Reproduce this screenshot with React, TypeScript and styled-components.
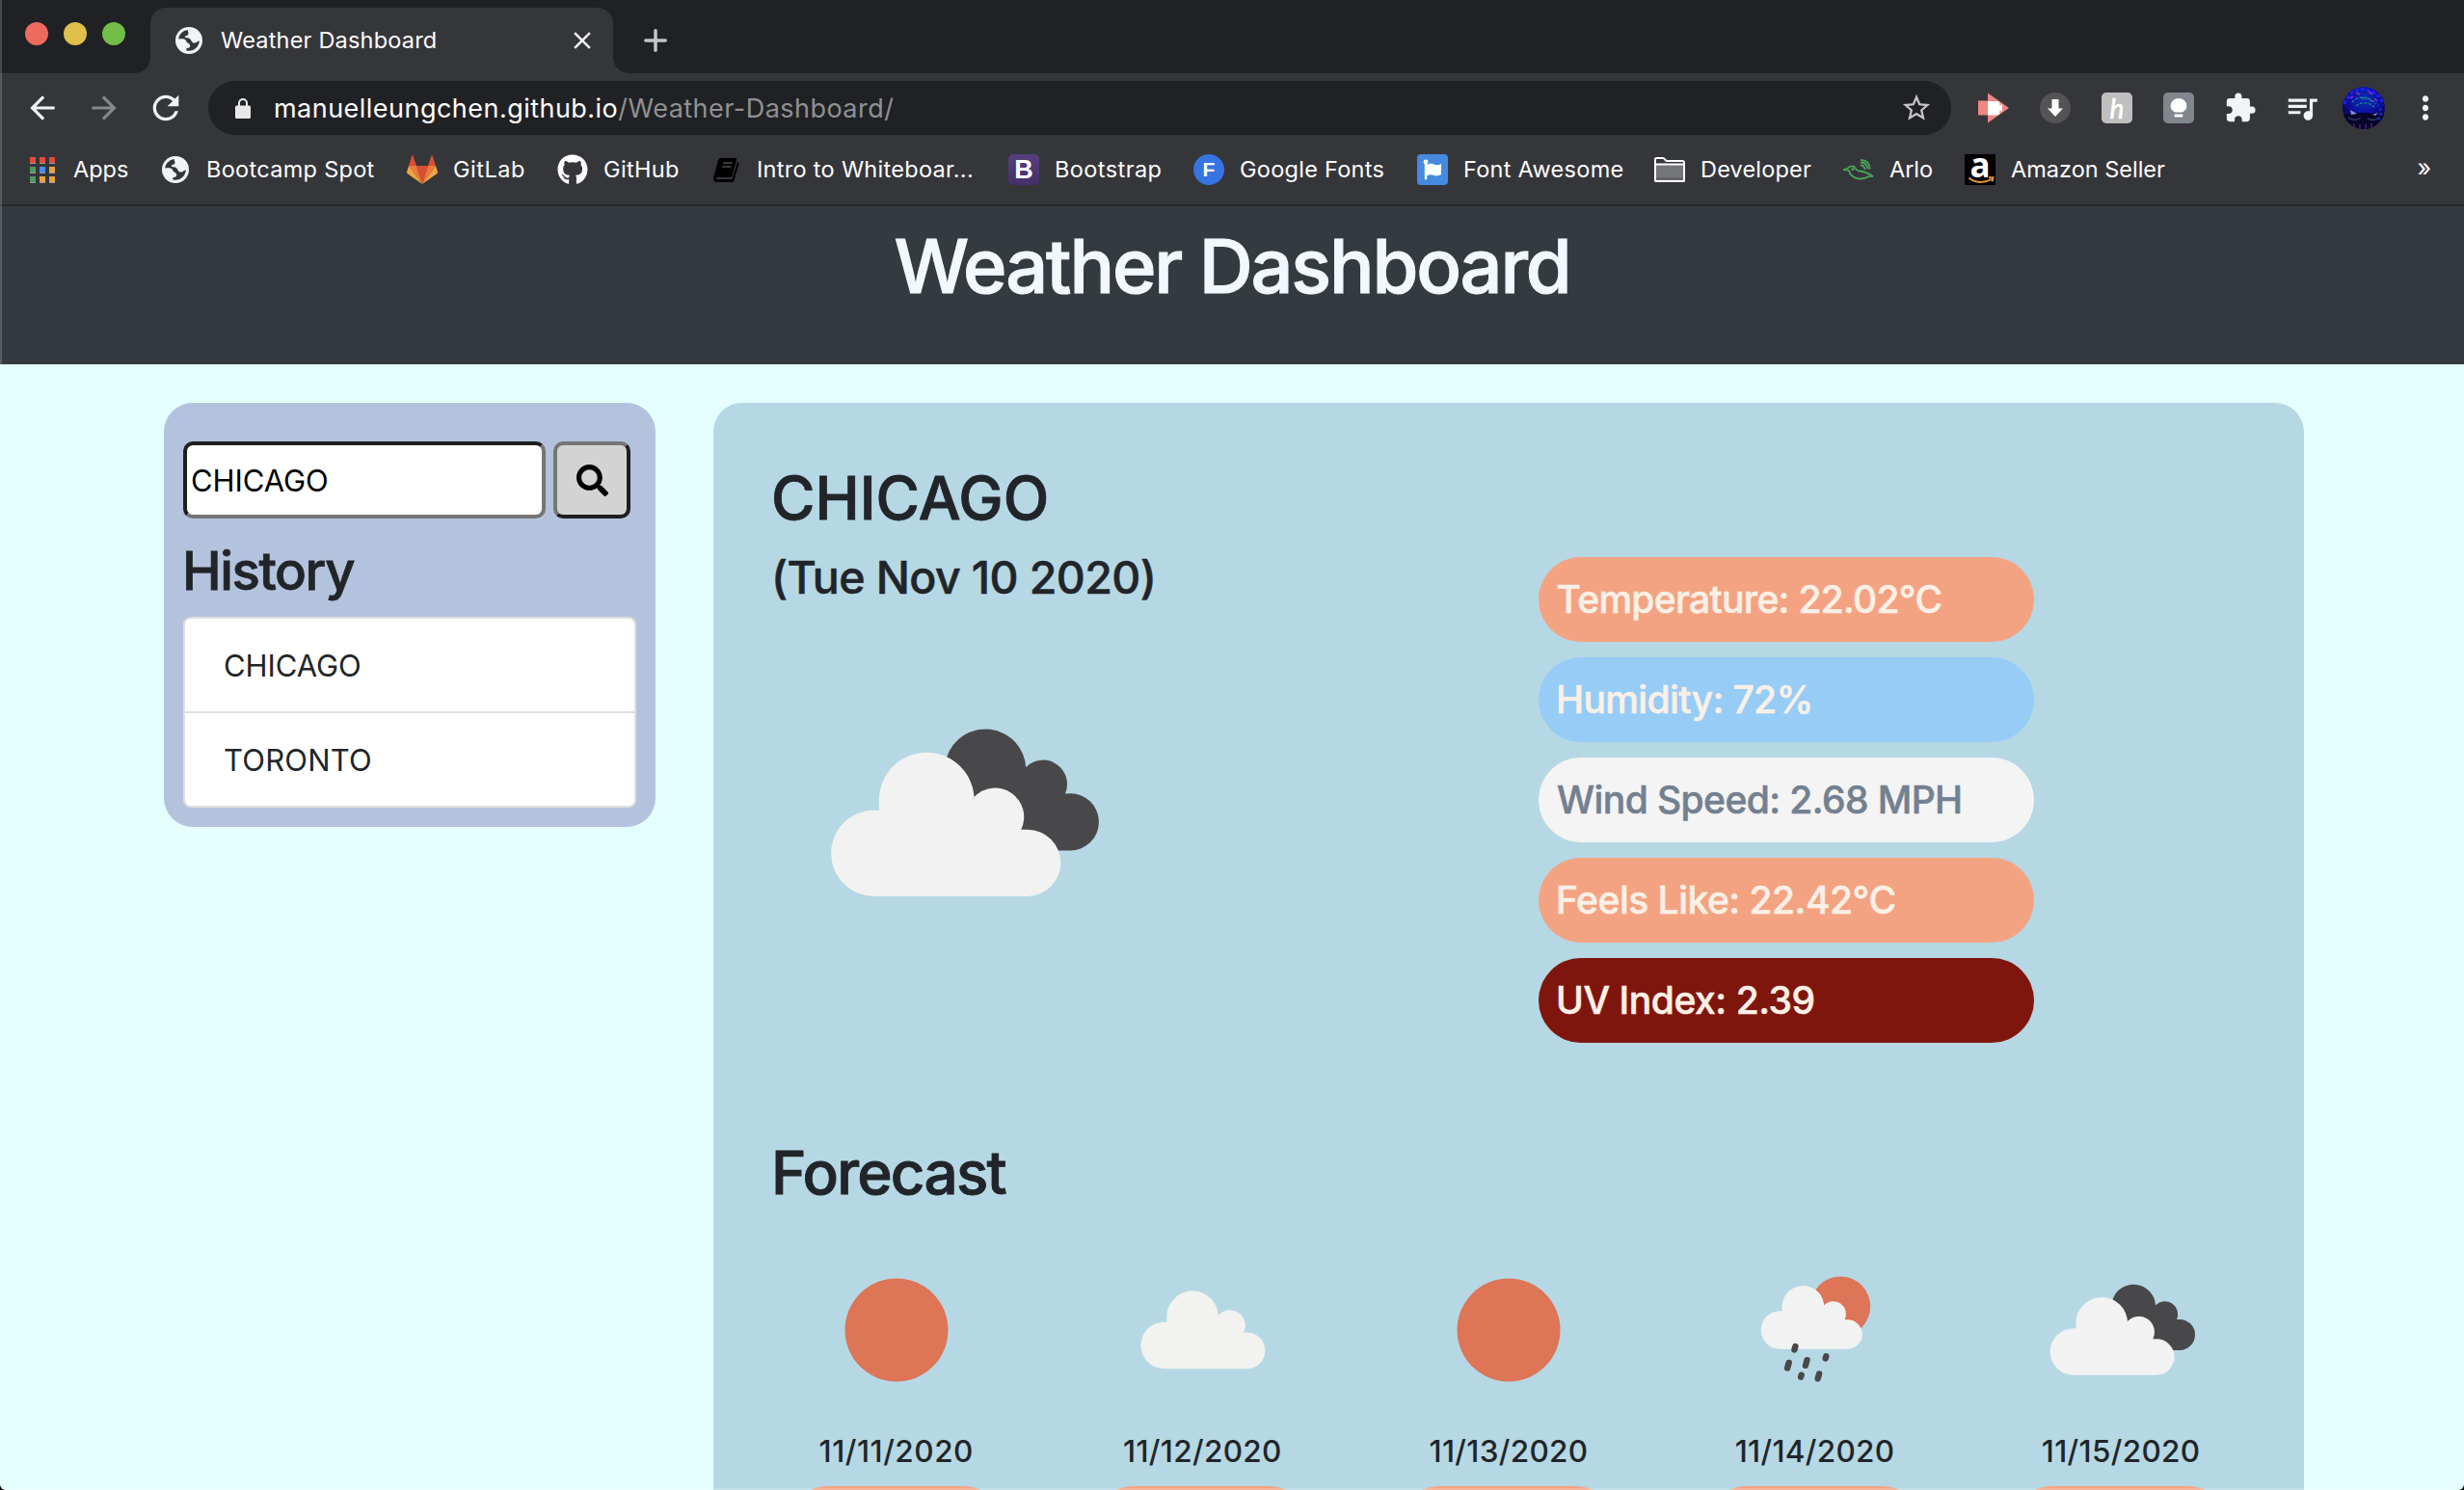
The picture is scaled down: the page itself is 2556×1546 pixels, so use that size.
import React from 'react';
import styled, { createGlobalStyle } from 'styled-components';
import {
  MdArrowBack,
  MdArrowForward,
  MdClose,
  MdExtension,
  MdMoreVert,
  MdQueueMusic,
  MdRefresh,
  MdStarBorder,
} from 'react-icons/md';
import { FaGithub, FaSearch } from 'react-icons/fa';

const GlobalStyle = createGlobalStyle`
  * { box-sizing: border-box; }
  body { margin: 0; background: #0b0b0c; }
  h1, h2, h3, h4, p, ul { margin: 0; padding: 0; font-weight: inherit; }
`;

const Window = styled.div`
  position: relative;
  display: flex;
  flex-direction: column;
  width: 2556px;
  height: 1546px;
  overflow: hidden;
  border-radius: 0 0 6px 6px;
  background: #e5ffff;
  color: #212529;
  font-family: Inter, 'Liberation Sans', sans-serif;

  &::after {
    content: '';
    position: absolute;
    inset: 0;
    border-left: 2px solid rgba(255, 255, 255, 0.18);
    border-bottom: 2px solid rgba(255, 255, 255, 0.18);
    pointer-events: none;
  }
`;

/* ---------- browser chrome ---------- */

const TabStrip = styled.div`
  display: flex;
  flex: none;
  height: 76px;
  background: #202124;
`;

const TrafficLights = styled.div`
  display: flex;
  gap: 16px;
  width: 156px;
  padding: 23px 0 0 26px;
`;

const Light = styled.span<{ $color: string }>`
  width: 24px;
  height: 24px;
  border-radius: 50%;
  background: ${(p) => p.$color};
`;

const Tab = styled.div`
  position: relative;
  display: flex;
  align-items: center;
  width: 480px;
  height: 68px;
  margin-top: 8px;
  padding: 0 17px 0 24px;
  border-radius: 16px 16px 0 0;
  background: #35363a;
  color: #f1f3f4;

  &::before,
  &::after {
    content: '';
    position: absolute;
    bottom: 0;
    width: 16px;
    height: 16px;
  }
  &::before {
    left: -16px;
    background: radial-gradient(circle at 0 0, transparent 15.5px, #35363a 16px);
  }
  &::after {
    right: -16px;
    background: radial-gradient(circle at 100% 0, transparent 15.5px, #35363a 16px);
  }
`;

const TabTitle = styled.span`
  flex: 1;
  margin: -1px 0 0 17px;
  color: #fff;
  font-size: 23.5px;
  letter-spacing: 0.2px;
  white-space: nowrap;
`;

const NewTab = styled.div`
  display: flex;
  align-items: center;
  margin: 8px 0 0 32px;
`;

const Toolbar = styled.div`
  display: flex;
  flex: none;
  align-items: center;
  height: 72px;
  padding: 0 24px 0 28px;
  background: #35363a;
  color: #f1f3f4;
`;

const NavButtons = styled.div`
  display: flex;
  gap: 32px;
  margin-right: 28px;
`;

const Slot = styled.span<{ $dim?: boolean }>`
  display: flex;
  flex: none;
  align-items: center;
  justify-content: center;
  width: 32px;
  height: 32px;
  color: ${(p) => (p.$dim ? '#86878a' : '#f1f3f4')};
  svg { flex: none; display: block; }
`;

const AddressBar = styled.div`
  display: flex;
  align-items: center;
  width: 1808px;
  height: 56px;
  padding: 0 20px 0 28px;
  border-radius: 28px;
  background: #202124;
`;

const Url = styled.span`
  flex: 1;
  margin-left: 24px;
  color: #fff;
  font-size: 27px;
  letter-spacing: 0.47px;
  white-space: nowrap;
`;

const UrlPath = styled.span`
  color: #8f9194;
`;

const Extensions = styled.div`
  display: flex;
  gap: 32px;
  margin-left: 28px;
`;

const ExtTile = styled.span<{ $bg: string; $round?: boolean }>`
  display: flex;
  align-items: center;
  justify-content: center;
  width: 32px;
  height: 32px;
  border-radius: ${(p) => (p.$round ? '50%' : '5px')};
  background: ${(p) => p.$bg};
  color: #fff;
`;

const HoneyMark = styled.span`
  font: italic 400 28px/30px Lato, sans-serif;
  -webkit-text-stroke: 0.6px currentColor;
`;

const BookmarksBar = styled.div`
  display: grid;
  flex: none;
  grid-template-columns: 138px 256px 156px 159px 309px 192px 232px 246px 196px 126px 1fr auto;
  align-items: start;
  height: 66px;
  padding: 12px 34px 0 28px;
  border-bottom: 2px solid #272828;
  background: #35363a;
`;

const Bookmark = styled.div`
  display: flex;
  align-items: center;
  gap: 16px;
  height: 32px;
`;

const BookmarkLabel = styled.span<{ $track: number }>`
  margin-top: -1px;
  color: #fff;
  font-size: 23.5px;
  letter-spacing: ${(p) => p.$track}px;
  white-space: nowrap;
`;

const LetterTile = styled.span<{ $bg: string; $radius: string; $size: number }>`
  display: flex;
  align-items: center;
  justify-content: center;
  width: 32px;
  height: 32px;
  border-radius: ${(p) => p.$radius};
  background: ${(p) => p.$bg};
  color: #fff;
  font: 700 ${(p) => p.$size}px/32px 'Liberation Sans', Arial, sans-serif;
`;

const AmazonTile = styled.span`
  position: relative;
  width: 32px;
  height: 32px;
  background: #000;
  color: #fff;
  font: 700 35px/21px 'Open Sans', sans-serif;
  text-align: center;
  svg { position: absolute; left: 0; top: 0; }
`;

const More = styled.span`
  color: #fff;
  font-size: 25px;
  line-height: 29px;
`;

/* ---------- page ---------- */

const PageHeader = styled.header`
  flex: none;
  height: 164px;
  padding-top: 14px;
  background: #353a3e;
  text-align: center;
`;

const PageTitle = styled.h1`
  color: #f2f8fe;
  font-size: 77.5px;
  font-weight: 500;
  line-height: 96px;
  letter-spacing: -2.14px;
  -webkit-text-stroke: 0.014em currentColor;
`;

const Main = styled.main`
  display: flex;
  flex: 1;
  align-items: flex-start;
  gap: 60px;
  padding: 40px 0 0 170px;
`;

const Sidebar = styled.aside`
  width: 510px;
  height: 440px;
  padding: 40px 20px 20px;
  border-radius: 30px;
  background: #b4c3dd;
`;

const SearchRow = styled.div`
  display: flex;
  gap: 8px;
`;

const SearchInput = styled.input`
  width: 376px;
  height: 80px;
  padding: 0 4px;
  border: 4px solid;
  border-color: #1f1f1f #767676 #767676 #1f1f1f;
  border-radius: 10px;
  outline: none;
  background: #fff;
  color: #000;
  font: 400 31px Inter, sans-serif;
  letter-spacing: -0.08px;
`;

const SearchButton = styled.button`
  display: flex;
  align-items: center;
  justify-content: center;
  width: 80px;
  height: 80px;
  padding: 0;
  border: 4px solid;
  border-color: #767676 #1f1f1f #1f1f1f #767676;
  border-radius: 10px;
  background: #d3d3d3;
  color: #000;
`;

const HistoryTitle = styled.h3`
  margin: 20px 0 14px -1px;
  font-size: 54.5px;
  font-weight: 500;
  line-height: 68px;
  letter-spacing: -1.4px;
  -webkit-text-stroke: 0.014em currentColor;
`;

const HistoryList = styled.ul`
  overflow: hidden;
  border: 2px solid #dfdfdf;
  border-radius: 8px;
  background: #fff;
  list-style: none;
`;

const HistoryItem = styled.li<{ $track: number }>`
  height: 98px;
  padding-left: 40px;
  border-bottom: 2px solid #dfdfdf;
  font-size: 31px;
  line-height: 97px;
  letter-spacing: ${(p) => p.$track}px;
  &:last-child { height: 96px; border-bottom: 0; }
`;

const Panel = styled.section`
  width: 1650px;
  height: 1180px;
  padding: 61px 60px 0;
  border-radius: 30px;
  background: #b6d8e4;
`;

const SectionTitle = styled.h2<{ $track: number }>`
  font-size: 62px;
  font-weight: 500;
  line-height: 76px;
  letter-spacing: ${(p) => p.$track}px;
  -webkit-text-stroke: 0.014em currentColor;
`;

const Current = styled.div`
  display: grid;
  grid-template-columns: 796px 514px;
  margin: 15px 0 97px;
`;

const CurrentDate = styled.h3`
  margin-bottom: 15px;
  font-size: 46.5px;
  font-weight: 500;
  line-height: 58px;
  letter-spacing: -0.6px;
  -webkit-text-stroke: 0.012em currentColor;
`;

const Stats = styled.div`
  display: flex;
  flex-direction: column;
  gap: 16px;
  padding-top: 8px;
`;

const Stat = styled.div<{ $bg: string; $fg?: string; $track: number; $pad: number }>`
  height: 88px;
  padding-left: ${(p) => p.$pad}px;
  border-radius: 44px;
  background: ${(p) => p.$bg};
  color: ${(p) => p.$fg || '#faf0e6'};
  font-size: 39px;
  font-weight: 500;
  line-height: 87px;
  letter-spacing: ${(p) => p.$track}px;
  white-space: nowrap;
  -webkit-text-stroke: 0.014em currentColor;
`;

const ForecastGrid = styled.div`
  display: grid;
  grid-template-columns: repeat(5, 317.6px);
  margin: 25px -29px 0;
`;

const Day = styled.div`
  display: flex;
  flex-direction: column;
  align-items: center;
`;

const DayDate = styled.p<{ $track: number }>`
  margin: 7px 0 17px;
  font-size: 31.5px;
  font-weight: 500;
  line-height: 38px;
  letter-spacing: ${(p) => p.$track}px;
`;

const DayPill = styled.div`
  width: 228px;
  height: 88px;
  margin-right: 2px;
  border-radius: 44px;
  background: #f4a382;
`;

const WeatherSvg = styled.svg`
  display: block;
  overflow: visible;
`;

/* ---------- drawings ---------- */

const CLOUD =
  'M495 1484 A125 125 0 0 1 495 1234 L510 1234 L509 1205 A138.500 138.500 0 0 1 786 1205 L786 1195 A84 84 0 0 1 922 1290 L940 1290 A97 97 0 0 1 940 1484 Z';
const BACK_CLOUD =
  'M706 1080 A118 118 0 0 1 936 1109 A70 70 0 0 1 1050 1186 L1065 1185 A83 83 0 0 1 1065 1351 L1000 1351 L780 1200 Z';

const BrokenClouds = ({ transform }: { transform: string }) => (
  <g transform={transform}>
    <path d={BACK_CLOUD} fill="#48484a" />
    <path d={CLOUD} fill="#f2f2f2" />
  </g>
);

const Sun = () => (
  <WeatherSvg width="200" height="200" viewBox="0 0 200 200">
    <circle cx="100" cy="100" r="53.5" fill="#dd7556" />
  </WeatherSvg>
);

const Cloud = () => (
  <WeatherSvg width="200" height="200" viewBox="0 0 200 200">
    <path d={CLOUD} transform="translate(-35.2 -147) scale(.1935)" fill="#f2f2f0" />
  </WeatherSvg>
);

const Overcast = () => (
  <WeatherSvg width="200" height="200" viewBox="0 0 200 200">
    <BrokenClouds transform="translate(-45 -140.3) scale(.1934)" />
  </WeatherSvg>
);

const SunRain = () => (
  <WeatherSvg width="200" height="200" viewBox="0 0 200 200">
    <circle cx="126.2" cy="75.5" r="31" fill="#dd7556" />
    <path d={CLOUD} transform="translate(-14.6 -114) scale(.1575)" fill="#f2f2f2" />
    <g stroke="#48484a" strokeWidth="6.400" strokeLinecap="round">
      <path d="M79.4 117l-1 3.400M72.700 133.900l-1.600 5.600M91.500 131.200l-1.600 5.600M111.300 127.400l-.6 2M85.700 146.700l-.6 2M104.100 145.400l-1.400 5" />
    </g>
  </WeatherSvg>
);

const GlobeIcon = () => (
  <svg width="28" height="28" viewBox="0 0 28 28">
    <circle cx="14" cy="14" r="14" fill="#f1f3f4" />
    <path
      d="M3.200 12.600C3.800 7.600 7.600 3.900 12.800 3.100c-.3 1.300.6 2 .7 3.300.1 1.700-1 2.200-2.400 2.500-1.200.3-1.700 1.200-.9 1.900 1.100 1 3.200.2 4.600 1.300 1.300 1.100 1.500 2.600 2.600 3.600 1.600 1.400 4 .9 5.200-.4.7-.8 1.500-.9 2.200-.8-.3 5.800-4.900 10.300-10.800 10.300-.9 0-1.800-.1-2.600-.3v-2.400c1.800.1 3.600-.7 3.800-2.300.2-1.700-1.200-2.600-2.600-3.300-1.300-.7-1.200-2.200-2.400-3.200-1.900-1.500-4.600-.9-7-.7z"
      fill="#35363a"
    />
  </svg>
);

const AppsIcon = () => (
  <svg width="26" height="27" viewBox="0 0 26 27">
    {[
      ['#e34a3f', '#e34a3f', '#e34a3f'],
      ['#519a5d', '#4a8af4', '#e8a33d'],
      ['#519a5d', '#e8a33d', '#e8a33d'],
    ].map((row, y) =>
      row.map((c, x) => (
        <g key={`${x}${y}`}>
          <rect x={x * 10} y={y * 10} width="6" height="7" fill="#9a9a9a" />
          <rect x={x * 10} y={y * 10} width="6" height="6" fill={c} />
        </g>
      )),
    )}
  </svg>
);

const GitLabIcon = () => (
  <svg width="32" height="30" viewBox="0 0 32 30">
    <path d="M16 30L10 11h12z" fill="#d94f33" />
    <path d="M16 30L10 11H2z" fill="#ec7a3b" />
    <path d="M16 30l6-19h8z" fill="#ec7a3b" />
    <path d="M2 11L0 17.500c-.2.6 0 1 .4 1.400L16 30z" fill="#f0a343" />
    <path d="M30 11l2 6.500c.2.6 0 1-.4 1.400L16 30z" fill="#f0a343" />
    <path d="M2 11h8L6.500.6c-.2-.6-.9-.6-1.100 0zM30 11h-8L25.500.6c.2-.6.9-.6 1.100 0z" fill="#d94f33" />
  </svg>
);

const BookIcon = () => (
  <svg width="27" height="25" viewBox="0 0 27 25">
    <path d="M8 0h14.500c1.200 0 1.800.9 1.500 2l-4.500 16.500c-.3 1-1.100 1.500-2 1.500H4c-1.500 0-1.700 2 0 2h15.500L25 4c1.200.3 1.700 1.200 1.400 2.300L21.500 23c-.3 1.200-1.200 2-2.300 2H3.500C1 25-.4 22.500.2 20L5 2.500C5.400 1 6.600 0 8 0z" fill="#000" />
    <path d="M10 5h9.500M9 9h9.500" stroke="#4a4b4f" strokeWidth="1.400" />
  </svg>
);

const FlagIcon = () => (
  <svg width="32" height="32" viewBox="0 0 32 32">
    <rect width="32" height="32" rx="4" fill="#448ae0" />
    <circle cx="9" cy="8" r="2.400" fill="#fff" />
    <path d="M7.800 8h2.400v17.300a1.200 1.200 0 0 1-2.400 0z" fill="#fff" />
    <path d="M10 11c4-2.300 6.500-.9 9 0 2 .7 4 .2 6-.9v11c-3 1.800-5.200 1.600-8 .6-2.600-.9-4.500-.7-7 .7z" fill="#fff" />
  </svg>
);

const FolderIcon = () => (
  <svg width="32" height="26" viewBox="0 0 32 26" fill="none" stroke="#fff" strokeWidth="2">
    <path d="M1 7.500h30V24a1 1 0 0 1-1 1H2a1 1 0 0 1-1-1z" fill="#747578" />
    <path d="M2 22.500h28" stroke="#5d5e61" />
    <path d="M1 8V2.500A1.500 1.500 0 0 1 2.500 1H9c1 0 1.500.6 2 1.300C11.500 3.300 12 4 13 4h16.500A1.500 1.500 0 0 1 31 5.500V24a1 1 0 0 1-1 1H2a1 1 0 0 1-1-1z" />
  </svg>
);

const ArloIcon = () => (
  <svg width="32" height="22" viewBox="0 0 32 22" fill="none" stroke="#48a558" strokeWidth="1.800">
    <path d="M0 11c3 0 4.300-.6 5.500-2 1.800-2 5.500-2.200 7 .4.9 1.600 1.800 3 4 3.100 4 .2 8 .6 14.500 5.700-3-.6-4.200-.4-5.500.4C23.500 20 20 20.800 16 20.300 10.500 19.500 7 16.500 6 12c-1.500-.8-3.500-1-6-1z" />
    <path d="M18 6.500c3 .2 4.500 2 4.500 4.500M18 3.500c4.500.2 7.300 2.800 7.500 7M18 .9c6 .2 9.500 4 9.800 9.600" />
    <circle cx="10" cy="10.500" r=".7" />
  </svg>
);

const LockIcon = () => (
  <svg width="16" height="21" viewBox="0 0 16 21">
    <path d="M4 9V5a4 4 0 0 1 8 0v4" fill="none" stroke="#e8eaed" strokeWidth="2" />
    <rect y="7.500" width="16" height="13.500" rx="1.500" fill="#e8e8e8" />
  </svg>
);

const ScreencastIcon = () => (
  <svg width="32" height="32" viewBox="0 0 32 32">
    <path d="M10 .5L32 16 10 31.500v-8H0v-15h10z" fill="#ef8683" />
    <path d="M10 9h9.500c2 0 3 1 3 3v2L25 11.500v9L22.500 18v2.500c0 2-1 3-3 3H10z" fill="#fff" />
  </svg>
);

const DownloadIcon = () => (
  <svg width="18" height="18" viewBox="0 0 18 18">
    <path d="M5.500 0h7v9.500H17L9 18 1 9.500h4.500z" fill="#fff" />
  </svg>
);

const BulbIcon = () => (
  <svg width="18" height="20" viewBox="0 0 18 20">
    <path d="M5 14.500C2 12.800.6 10.500.6 8a8.400 8 0 0 1 16.800 0c0 2.500-1.400 4.800-4.400 6.500zM4.700 16.500h8.600v3H4.700z" fill="#fff" />
  </svg>
);

const Avatar = () => (
  <svg width="44" height="44" viewBox="0 0 44 44">
    <defs>
      <clipPath id="avatarClip">
        <circle cx="22" cy="22" r="22" />
      </clipPath>
      <radialGradient id="avatarGlow" cx=".5" cy=".3" r=".65">
        <stop offset="0" stopColor="#0b2fae" />
        <stop offset=".55" stopColor="#0c0f9c" />
        <stop offset="1" stopColor="#09052f" />
      </radialGradient>
    </defs>
    <g clipPath="url(#avatarClip)" fill="none">
      <rect width="44" height="44" fill="url(#avatarGlow)" />
      <path d="M2 18C6 6 16 1 24 3s16 6 18 16" stroke="#1c20f0" strokeWidth="3" strokeDasharray="4 2" />
      <path d="M10 16c5-6 16-8 25 2M14 20c6-5 14-4 20 2M20 12c5-1 9 1 12 5" stroke="#1d7fa0" strokeWidth="1.300" strokeDasharray="3 1.500" />
      <path d="M14 6l4 2M27 5l4 3M8 12l3-2M33 12l3 3" stroke="#8a2be0" strokeWidth="1.600" />
      <path d="M0 30c10-4 30-4 44 0v16H0z" fill="#08042a" />
      <path d="M36 18c5 5 5 12 1 16" stroke="#1420c8" strokeWidth="3" strokeDasharray="3 2" />
      <path d="M8 24l7 4-6 1zM31 29l6-2-3 3z" fill="#8d93c9" />
      <path d="M6 32c4 3 9 3 13 0M26 33c4 2 8 2 12-1" stroke="#2a3a63" strokeWidth="1.500" />
      <path d="M12 38v6M18 39v5M24 39v5M30 38v6" stroke="#3c1a56" strokeWidth="2" />
    </g>
  </svg>
);

const history = [
  { city: 'CHICAGO', track: -0.08 },
  { city: 'TORONTO', track: 0.19 },
];

const stats = [
  { text: 'Temperature: 22.02°C', bg: '#f4a382', track: -0.72, pad: 18.5 },
  { text: 'Humidity: 72%', bg: '#96ccf6', track: -0.62, pad: 18 },
  { text: 'Wind Speed: 2.68 MPH', bg: '#f4f4f4', fg: '#738091', track: -0.59, pad: 19 },
  { text: 'Feels Like: 22.42°C', bg: '#f4a382', track: -0.5, pad: 18 },
  { text: 'UV Index: 2.39', bg: '#7f160d', track: -0.45, pad: 18 },
];

const days = [
  { date: '11/11/2020', track: 0.53, Icon: Sun },
  { date: '11/12/2020', track: 0.33, Icon: Cloud },
  { date: '11/13/2020', track: 0.32, Icon: Sun },
  { date: '11/14/2020', track: 0.3, Icon: SunRain },
  { date: '11/15/2020', track: 0.32, Icon: Overcast },
];

const bookmarks = [
  { label: 'Apps', track: 0, icon: <AppsIcon /> },
  { label: 'Bootcamp Spot', track: 0.3, icon: <GlobeIcon /> },
  { label: 'GitLab', track: 0.52, icon: <GitLabIcon /> },
  { label: 'GitHub', track: 0.35, icon: <FaGithub size={32} color="#fff" /> },
  { label: 'Intro to Whiteboar...', track: 0.3, icon: <BookIcon /> },
  { label: 'Bootstrap', track: 0.42, icon: <LetterTile $bg="linear-gradient(#563f7c, #45306a)" $radius="5px" $size={27}>B</LetterTile> },
  { label: 'Google Fonts', track: 0.27, icon: <LetterTile $bg="#3574e2" $radius="50%" $size={21}>F</LetterTile> },
  { label: 'Font Awesome', track: 0.28, icon: <FlagIcon /> },
  { label: 'Developer', track: 0.18, icon: <FolderIcon /> },
  { label: 'Arlo', track: -0.04, icon: <ArloIcon /> },
  {
    label: 'Amazon Seller',
    track: 0,
    icon: (
      <AmazonTile>
        a
        <svg width="32" height="32" viewBox="0 0 32 32">
          <path d="M4.500 24.500c6 5.500 16 5.800 23 1.500M25 24.300h4.500l-1 4" fill="none" stroke="#e8952f" strokeWidth="2" />
        </svg>
      </AmazonTile>
    ),
  },
];

export default function App() {
  return (
    <>
      <GlobalStyle />
      <Window>
        <TabStrip>
          <TrafficLights>
            <Light $color="#ed6a5e" />
            <Light $color="#e0c04c" />
            <Light $color="#72be47" />
          </TrafficLights>
          <Tab>
            <Slot>
              <GlobeIcon />
            </Slot>
            <TabTitle>Weather Dashboard</TabTitle>
            <MdClose size={30} />
          </Tab>
          <NewTab>
            <svg width="24" height="24" viewBox="0 0 24 24" stroke="#c3c5c8" strokeWidth="3.500" strokeLinecap="round">
              <path d="M12 1.800v20.400M1.800 12h20.400" />
            </svg>
          </NewTab>
        </TabStrip>

        <Toolbar>
          <NavButtons>
            <Slot>
              <MdArrowBack size={38} />
            </Slot>
            <Slot $dim>
              <MdArrowForward size={38} />
            </Slot>
            <Slot>
              <MdRefresh size={40} />
            </Slot>
          </NavButtons>
          <AddressBar>
            <LockIcon />
            <Url>
              manuelleungchen.github.io<UrlPath>/Weather-Dashboard/</UrlPath>
            </Url>
            <Slot>
              <MdStarBorder size={34} color="#c4c4c3" />
            </Slot>
          </AddressBar>
          <Extensions>
            <Slot>
              <ScreencastIcon />
            </Slot>
            <ExtTile $bg="#545454" $round>
              <DownloadIcon />
            </ExtTile>
            <ExtTile $bg="#bfbfbf">
              <HoneyMark>h</HoneyMark>
            </ExtTile>
            <ExtTile $bg="#80868b">
              <BulbIcon />
            </ExtTile>
            <Slot>
              <MdExtension size={34} />
            </Slot>
            <Slot>
              <MdQueueMusic size={38} />
            </Slot>
            <Slot>
              <Avatar />
            </Slot>
            <Slot>
              <MdMoreVert size={38} />
            </Slot>
          </Extensions>
        </Toolbar>

        <BookmarksBar>
          {bookmarks.map((b) => (
            <Bookmark key={b.label}>
              <Slot>{b.icon}</Slot>
              <BookmarkLabel $track={b.track}>{b.label}</BookmarkLabel>
            </Bookmark>
          ))}
          <More>»</More>
        </BookmarksBar>

        <PageHeader>
          <PageTitle>Weather Dashboard</PageTitle>
        </PageHeader>

        <Main>
          <Sidebar>
            <SearchRow>
              <SearchInput defaultValue="CHICAGO" />
              <SearchButton aria-label="Search">
                <FaSearch size={33} />
              </SearchButton>
            </SearchRow>
            <HistoryTitle>History</HistoryTitle>
            <HistoryList>
              {history.map((h) => (
                <HistoryItem key={h.city} $track={h.track}>
                  {h.city}
                </HistoryItem>
              ))}
            </HistoryList>
          </Sidebar>

          <Panel>
            <SectionTitle $track={0}>CHICAGO</SectionTitle>
            <Current>
              <div>
                <CurrentDate>(Tue Nov 10 2020)</CurrentDate>
                <WeatherSvg width="400" height="400" viewBox="0 0 400 400">
                  <BrokenClouds transform="translate(-70 -243) scale(.3571)" />
                </WeatherSvg>
              </div>
              <Stats>
                {stats.map((s) => (
                  <Stat key={s.text} $bg={s.bg} $fg={s.fg} $track={s.track} $pad={s.pad}>
                    {s.text}
                  </Stat>
                ))}
              </Stats>
            </Current>
            <SectionTitle $track={-1.78}>Forecast</SectionTitle>
            <ForecastGrid>
              {days.map(({ date, track, Icon }) => (
                <Day key={date}>
                  <Icon />
                  <DayDate $track={track}>{date}</DayDate>
                  <DayPill />
                </Day>
              ))}
            </ForecastGrid>
          </Panel>
        </Main>
      </Window>
    </>
  );
}
